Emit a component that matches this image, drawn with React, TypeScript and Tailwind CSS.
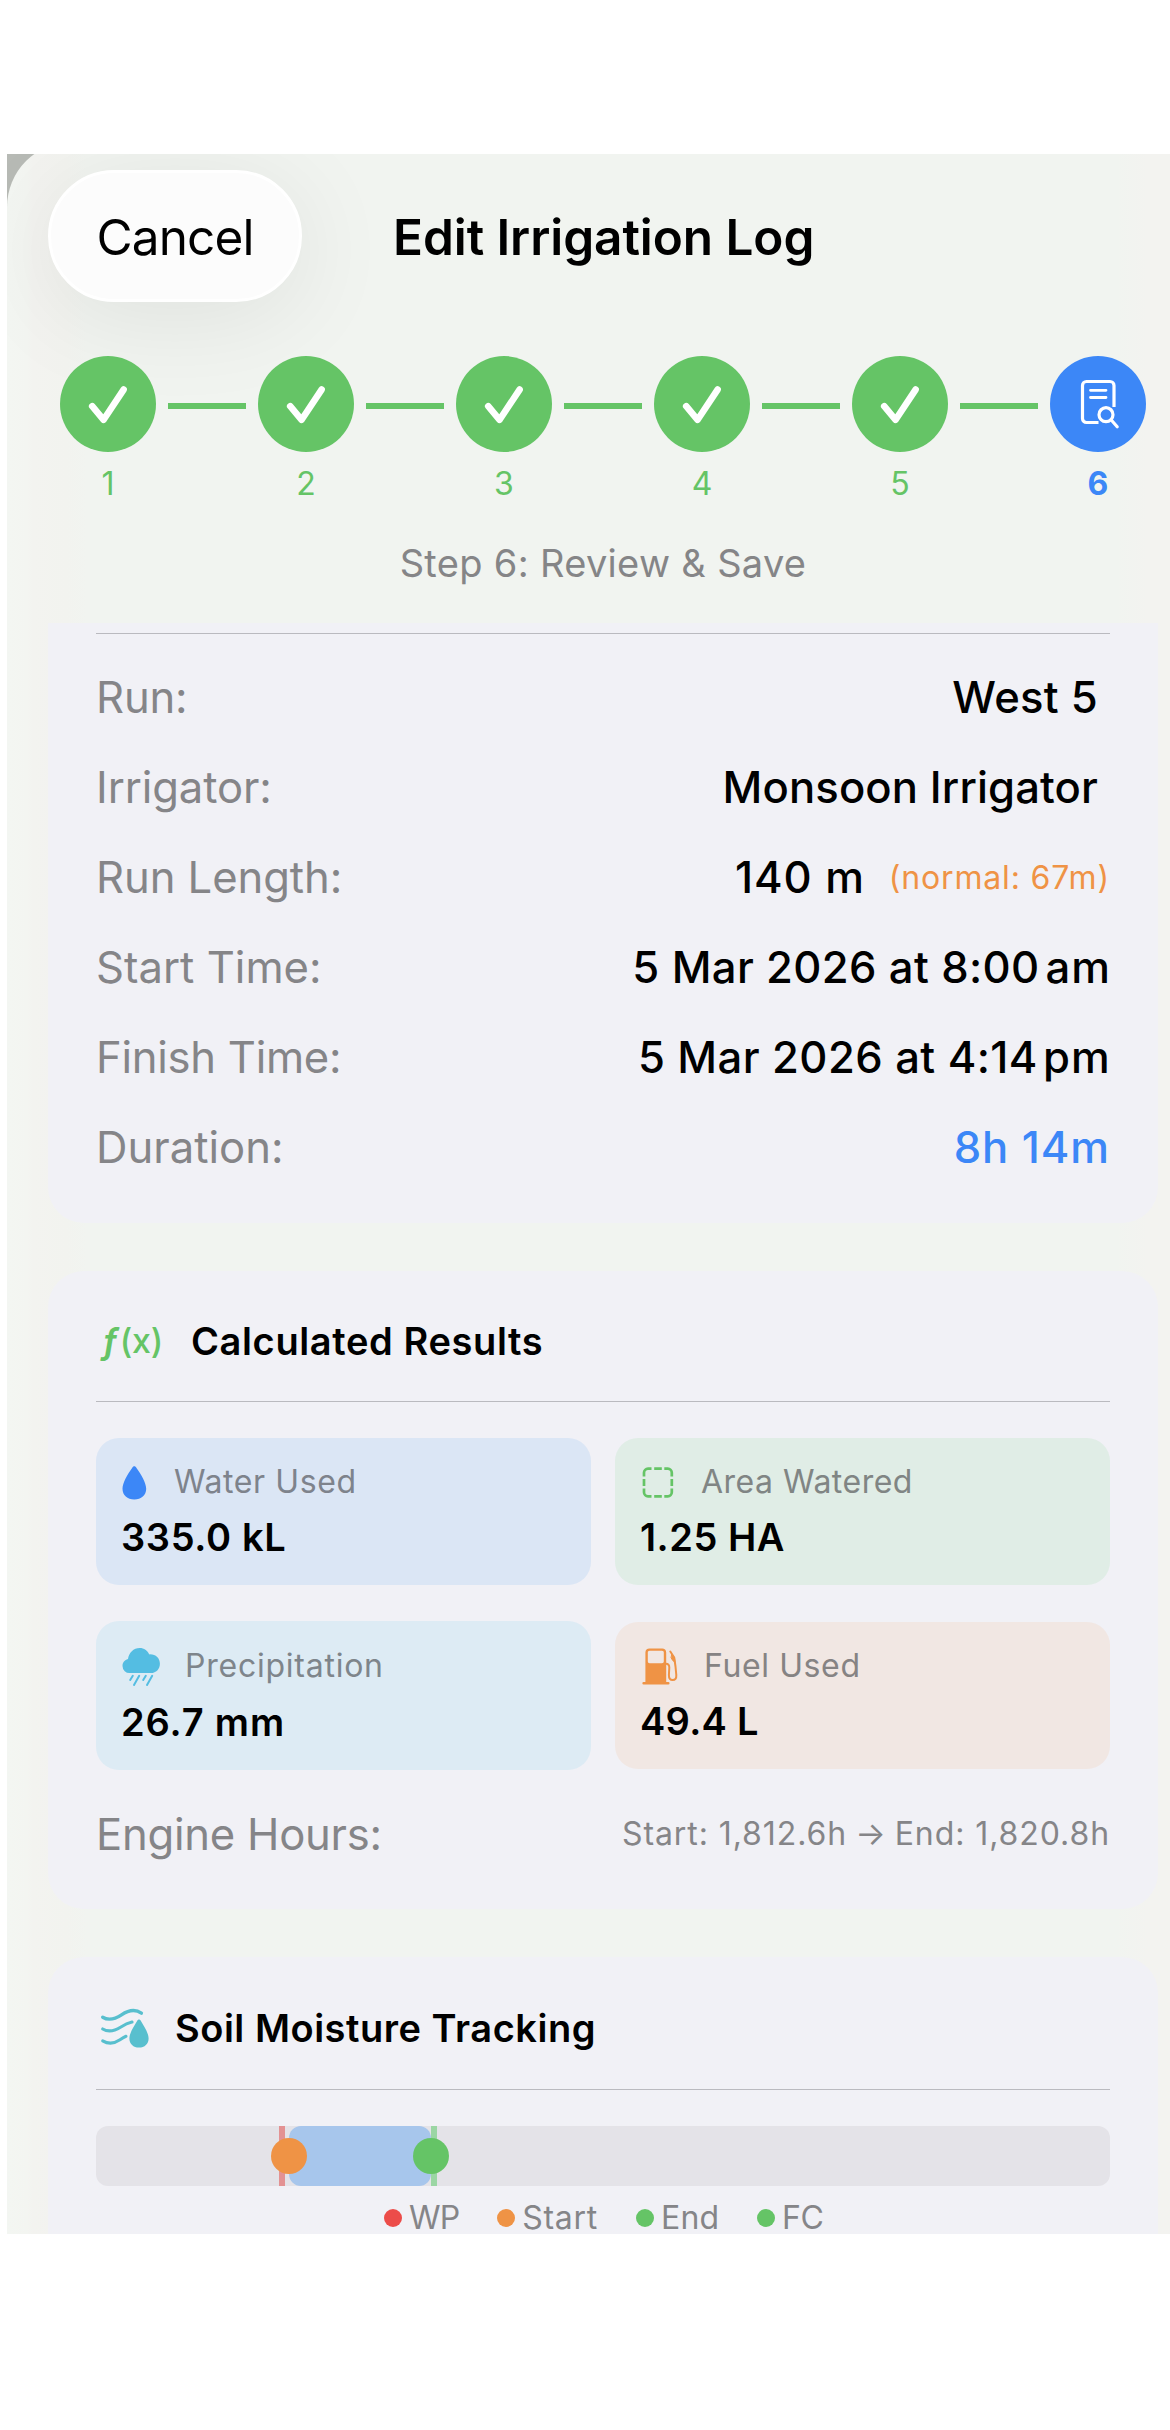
import React from "react";

const Check = () => (
  <svg className="size-24" viewBox="0 0 96 96" fill="none" stroke="#fff" strokeWidth="6.6" strokeLinecap="round" strokeLinejoin="round">
    <path d="M32.2 50.2 L43.6 63.8 L63.6 33.6" />
  </svg>
);

const DocSearch = () => (
  <svg className="size-24" viewBox="0 0 96 96" fill="none" stroke="#fff" strokeWidth="3.2" strokeLinecap="round" strokeLinejoin="round">
    <path strokeLinecap="butt" d="M48.5 66.5H36.5a4 4 0 0 1-4-4V29.5a4 4 0 0 1 4-4H60a4 4 0 0 1 4 4V51" />
    <path strokeWidth="2.8" d="M40.5 34.3H56M40.5 41.500H56" />
    <circle cx="56" cy="58.7" r="7" />
    <path d="M61.5 64.3L67.2 70.8" />
  </svg>
);

const Drop = () => (
  <svg className="h-[38px] w-[42px]" viewBox="0 0 42 38" fill="#3c87f7">
    <path d="M14.3 3.3C15.2 3.3 15.9 4 16.5 4.900C21 11.3 26.2 19.5 26.2 25.8C26.2 32.3 21.2 36.5 14.3 36.5S2.500 32.3 2.500 25.8C2.500 19.5 7.6 11.3 12.1 4.900C12.7 4 13.4 3.3 14.3 3.3Z" />
  </svg>
);

const DashedSquare = () => (
  <svg className="h-[38px] w-[42px]" viewBox="0 0 42 38" fill="none" stroke="#65c466" strokeWidth="2.7">
    <path d="M5 13.6V9.7a4 4 0 0 1 4-4h3.5M25.3 5.7h3.5a4 4 0 0 1 4 4v3.9M32.8 25.4v3.9a4 4 0 0 1-4 4h-3.5M12.5 33.3H9a4 4 0 0 1-4-4v-3.9" />
    <path d="M15.2 5.7h7.6M15.2 33.3h7.6M5 16v7M32.8 16v7" />
  </svg>
);

const RainCloud = () => (
  <svg className="h-[38px] w-[42px] overflow-visible" viewBox="0 0 42 38" fill="#54bde2">
    <path d="M10 26A7 7 0 0 1 2.5 19C2.5 15.5 4.7 13 8 12.1C8.8 5.8 13.6 1 19.7 1C24 1 27.6 3.5 29.2 7.4C35.6 7 39.9 11.2 39.9 16.7C39.9 22.2 36 26 31 26Z" />
    <path d="M12.8 28.8L10.2 33M19.2 28.8L14 38M25.8 28.8L23.2 33M32.2 28.8L27 38" fill="none" stroke="#54bde2" strokeWidth="2" strokeLinecap="round" />
  </svg>
);

const FuelPump = () => (
  <svg className="h-[38px] w-[42px]" viewBox="0 0 42 38" fill="none" stroke="#ef9345" strokeLinecap="round" strokeLinejoin="round">
    <path fill="#ef9345" fillRule="evenodd" stroke="none" d="M6.4 35V5.5C6.4 3 8 1.5 10.4 1.5H23.2C25.6 1.5 27.2 3 27.2 5.5V35H29.3A1.2 1.2 0 0 1 29.3 37.5H4.6A1.2 1.2 0 0 1 4.6 35ZM10.7 3.7C9.4 3.7 8.8 4.4 8.8 5.6V14.2C8.8 15.5 9.4 16.2 10.7 16.2H22.9C24.2 16.2 24.8 15.5 24.8 14.2V5.6C24.8 4.4 24.2 3.7 22.9 3.7Z" />
    <path strokeWidth="2" d="M27 16.8C29.3 16.8 30.3 18 30.3 20.5L29.9 28C29.8 31.5 31.3 33 33.6 33C36.2 33 37.5 31.5 37.3 28L36.5 19.5L35.2 10.5L31.3 4.5" />
    <path fill="#ef9345" strokeWidth="1" d="M33 7.5L35.4 10.5L36 15.5C34.5 14.5 33.2 13 32.2 11Z" />
  </svg>
);

const SoilMoisture = () => (
  <svg className="h-12 w-14" viewBox="0 0 56 48" fill="none" stroke="#58bfce" strokeWidth="3.4" strokeLinecap="round">
    <path d="M6.7 12.2C13 16 19.5 13.8 25.5 9.8C33 4.8 39.5 4 45.4 8.2" />
    <path d="M6.7 24C13 27.8 18.5 26 24.5 22.2C28.5 19.6 32 17.9 36 17.1" strokeWidth="3.1" />
    <path d="M6.7 35.8C13 39.6 19 38.2 24 34.8C26.4 33.1 28.2 32 30 31.3" strokeWidth="3.1" />
    <path fill="#58bfce" stroke="none" d="M43 14.5C43.8 14.5 44.4 15.1 44.8 15.8C48 21.2 52.6 28.2 52.6 33.4C52.6 38.9 48.6 42.5 43 42.5S33.4 38.9 33.4 33.4C33.4 28.2 38 21.2 41.2 15.8C41.6 15.1 42.2 14.5 43 14.5Z" />
  </svg>
);

const steps = [1, 2, 3, 4, 5];

function Row({ label, ls, children }: { label: string; ls: string; children: React.ReactNode }) {
  return (
    <div className="flex h-[90px] items-center justify-between pt-[2px]">
      <span className={`text-[43.6px] text-[#858588] ${ls}`}>{label}</span>
      <div className="flex items-center text-[43.6px] font-medium text-black">{children}</div>
    </div>
  );
}

const Divider = ({ className = "" }: { className?: string }) => <div className={`h-px bg-[#bababf] ${className}`} />;

type TileProps = { icon: React.ReactNode; slot: string; label: string; value: string; box: string; labelRow?: string; labelLs: string; valueLs: string; labelColor: string };
function Tile({ icon, slot, label, value, box, labelRow = "h-[39px]", labelLs, valueLs, labelColor }: TileProps) {
  return (
    <div className={`rounded-[23px] px-6 pt-6 ${box}`}>
      <div className={`flex items-center ${labelRow}`}>
        <div className={`shrink-0 ${slot}`}>{icon}</div>
        <span className={`text-[32px] ${labelLs} ${labelColor}`}>{label}</span>
      </div>
      <div className={`mt-[11px] ml-px text-[38px] leading-[50px] font-semibold text-black ${valueLs}`}>{value}</div>
    </div>
  );
}

const legend = [
  { label: "WP", dot: "bg-[#ec4c49]", ls: "-tracking-[0.9px]" },
  { label: "Start", dot: "bg-[#ef9345]", ls: "tracking-[0.75px]" },
  { label: "End", dot: "bg-[#65c466]", ls: "tracking-[0.1px]" },
  { label: "FC", dot: "bg-[#65c466]", ls: "-tracking-[0.5px]" },
];

export default function App() {
  return (
    <div className="h-[2430px] w-[1170px] overflow-hidden bg-white pt-[154px] pl-[7px] font-['Inter',sans-serif] whitespace-nowrap">
      <div className="h-[2080px] overflow-hidden bg-[#b7bab5]">
        <div className="-mt-3 h-[2092px] rounded-tl-[65px] bg-[linear-gradient(to_right,#f3f6f2_0px,#f3f5f1_20px,#f3f3f0_26px,#f2f3ef_60px,#f1f4f0_80px,#f1f4f0_1110px,#f3f3f0_1140px,#f3f3f0_1163px)] pt-7 pl-[41px]">
          {/* Navigation bar */}
          <header className="flex h-[132px] items-center">
            <button className="h-[132px] w-[254px] rounded-[66px] border-[3px] border-white bg-[#fcfcfc] pt-[2px] text-center text-[49.5px] tracking-[-0.87px] text-black shadow-[0_14px_100px_rgba(0,0,0,0.08)]">
              Cancel
            </button>
            <h1 className="ml-[91px] pt-[2px] text-[49.5px] font-semibold tracking-[-0.06px] text-black">Edit Irrigation Log</h1>
          </header>

          {/* Progress */}
          <div className="mt-[54px] ml-3 flex gap-3">
            {steps.map((n) => (
              <React.Fragment key={n}>
                <div className="flex w-24 shrink-0 flex-col items-center">
                  <div className="rounded-full bg-[#65c466]"><Check /></div>
                  <span className="mt-3 text-[32px] leading-10 text-[#65c466]">{n}</span>
                </div>
                <div className="mt-[47px] h-[6px] w-[78px] shrink-0 bg-[#65c466]" />
              </React.Fragment>
            ))}
            <div className="flex w-24 shrink-0 flex-col items-center">
              <div className="rounded-full bg-[#3c87f7]"><DocSearch /></div>
              <span className="mt-3 text-[32px] leading-10 font-bold text-[#3c87f7]">6</span>
            </div>
          </div>
          <p className="mt-[34px] w-[1110px] text-center text-[38px] leading-[51px] tracking-[0.32px] text-[#858587]">Step 6: Review &amp; Save</p>

          {/* Run details */}
          <section className="mt-[34px] h-[600px] w-[1110px] rounded-b-[36px] bg-[#f1f1f6] px-12 pt-[10px]">
            <Divider className="mb-[18px]" />
            <Row label="Run:" ls="-tracking-[0.16px]"><span className="pr-3 tracking-[0.27px]">West 5</span></Row>
            <Row label="Irrigator:" ls="-tracking-[0.08px]"><span className="pr-3 tracking-[0.12px]">Monsoon Irrigator</span></Row>
            <Row label="Run Length:" ls="-tracking-[0.07px]">
              <span className="tracking-[0.9px]">140 m</span>
              <span className="ml-6 text-[32px] font-normal tracking-[0.84px] text-[#ef9345]">(normal: 67m)</span>
            </Row>
            <Row label="Start Time:" ls="tracking-[0.02px]">
              <span className="tracking-[0.36px]">5 Mar 2026 at 8:00</span>
              <span className="-mr-px ml-[6px] tracking-[1px]">am</span>
            </Row>
            <Row label="Finish Time:" ls="-tracking-[0.27px]">
              <span className="tracking-[0.43px]">5 Mar 2026 at 4:14</span>
              <span className="-mr-px ml-[5px] tracking-[1.2px]">pm</span>
            </Row>
            <Row label="Duration:" ls="tracking-[0.02px]"><span className="tracking-[0.94px] text-[#3c87f7]">8h 14m</span></Row>
          </section>

          {/* Calculated results */}
          <section className="mt-12 h-[638px] w-[1110px] rounded-[36px] bg-[#f1f1f6] px-12 pt-9">
            <div className="flex h-[68px] items-center">
              <span className="flex w-[95px] items-center pl-[6px] text-[34px] leading-none font-semibold text-[#65c466]">
                <i className="mr-[2px] text-[36px]">ƒ</i>
                <span className="font-medium tracking-[-0.3px]">(x)</span>
              </span>
              <h2 className="text-[38px] font-semibold tracking-[0.62px] text-black">Calculated Results</h2>
            </div>
            <Divider className="mt-[26px]" />
            <div className="mt-9 grid grid-cols-2 items-center gap-x-6 gap-y-9">
              <Tile icon={<Drop />} slot="w-[54px]" label="Water Used" value="335.0 kL" box="h-[147px] bg-[#dbe6f5]" labelLs="tracking-[0.6px]" valueLs="tracking-[0.66px]" labelColor="text-[#7e838c]" />
              <Tile icon={<DashedSquare />} slot="w-[62px]" label="Area Watered" value="1.25 HA" box="h-[147px] bg-[#e0ede6]" labelLs="tracking-[0.49px]" valueLs="tracking-[0.51px]" labelColor="text-[#808584]" />
              <Tile icon={<RainCloud />} slot="w-[65px]" label="Precipitation" value="26.7 mm" box="h-[149px] bg-[#ddebf4]" labelRow="h-[41px]" labelLs="tracking-[0.76px]" valueLs="tracking-[0.85px]" labelColor="text-[#7e858b]" />
              <Tile icon={<FuelPump />} slot="w-[65px]" label="Fuel Used" value="49.4 L" box="h-[147px] bg-[#f1e7e3]" labelLs="tracking-[0.61px]" valueLs="tracking-[0.29px]" labelColor="text-[#868383]" />
            </div>
            <div className="mt-[19px] flex h-[90px] items-center justify-between pt-[2px] text-[#858588]">
              <span className="text-[43.6px] -tracking-[0.24px]">Engine Hours:</span>
              <span className="flex pb-[2px] text-[32px] tracking-[0.92px]">
                <span>Start: 1,812.6h</span>
                <span className="mr-[9px] ml-[8px] tracking-normal">→</span>
                <span>End: 1,820.8h</span>
              </span>
            </div>
          </section>

          {/* Soil moisture */}
          <section className="mt-12 h-[277px] w-[1110px] rounded-t-[36px] bg-[#f1f1f6] px-12 pt-9">
            <div className="flex h-[71px] items-center">
              <div className="w-[79px]"><SoilMoisture /></div>
              <h2 className="text-[38px] font-semibold tracking-[0.52px] text-black">Soil Moisture Tracking</h2>
            </div>
            <Divider className="mt-[25px]" />
            <div className="relative mt-9 h-[60px] rounded-[12px] bg-[#e4e3e8]">
              <div className="absolute top-0 left-[183px] h-full w-[6px] bg-[#e39293]" />
              <div className="absolute top-0 left-[335px] h-full w-[6px] bg-[#9bd6a4]" />
              <div className="absolute top-0 left-[193px] h-full w-[142px] rounded-[12px] bg-[#a7c6ec]" />
              <div className="absolute top-3 left-[175px] size-9 rounded-full bg-[#ef9345]" />
              <div className="absolute top-3 left-[317px] size-9 rounded-full bg-[#65c466]" />
            </div>
            <div className="mt-4 flex h-8 items-center gap-[38px] pl-[288px] text-[32px] leading-8 text-[#858588]">
              {legend.map((l) => (
                <span key={l.label} className="flex items-center gap-[7px]">
                  <i className={`size-[18px] rounded-full ${l.dot}`} />
                  <span className={l.ls}>{l.label}</span>
                </span>
              ))}
            </div>
          </section>
        </div>
      </div>
    </div>
  );
}
